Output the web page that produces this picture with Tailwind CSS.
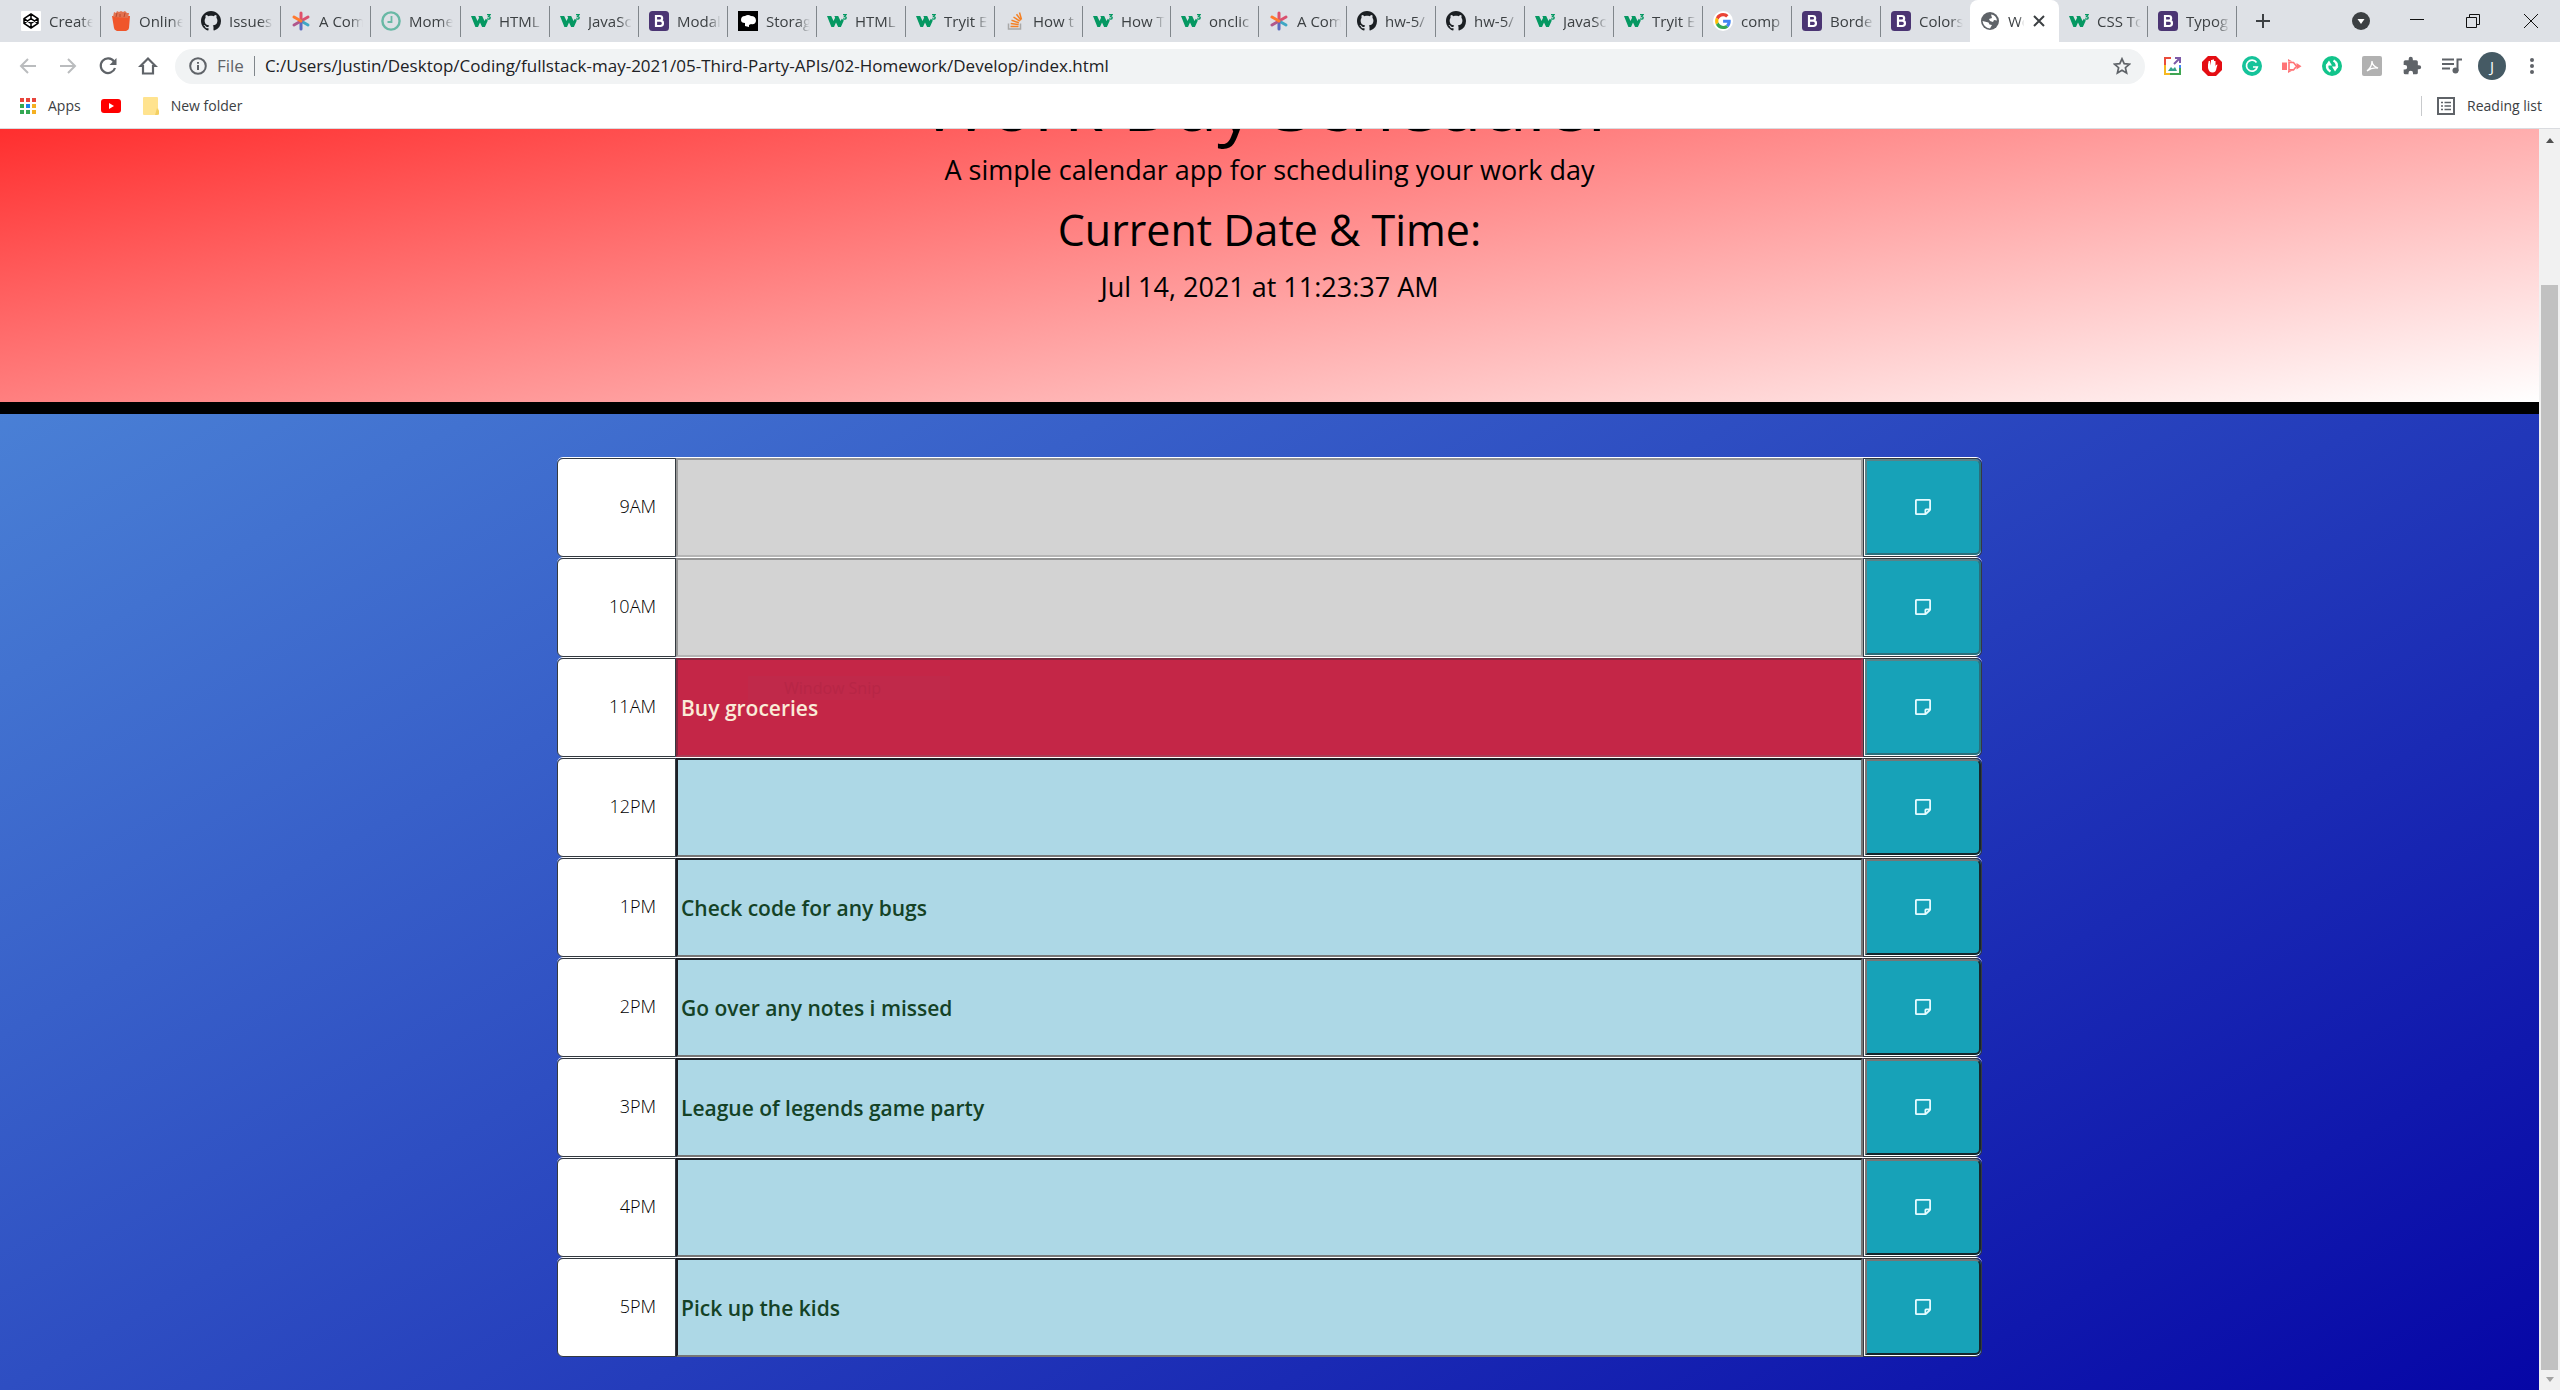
<!DOCTYPE html>
<html lang="en">
<head>
<meta charset="utf-8">
<title>Work Day Scheduler</title>
<script src="https://cdn.jsdelivr.net/npm/@tailwindcss/browser@4"></script>
</head>
<body class="h-screen overflow-hidden flex flex-col bg-white font-['Open_Sans',sans-serif] text-[#212529]">

<svg class="hidden" aria-hidden="true">
  <symbol id="codepen" viewBox="0 0 20 20"><rect width="20" height="20" rx="1" fill="#fff"/><path d="M10 3l7 4.600v4.800L10 17l-7-4.600V7.600zM3 7.600l7 4.800 7-4.800M3 12.400l7-4.800 7 4.800M10 3v4.600M10 12.400V17" fill="none" stroke="#000" stroke-width="1.500" stroke-linejoin="round"/></symbol>
  <symbol id="bin" viewBox="0 0 20 20"><path d="M1 5h18l-1 12q0 2-3 3H6q-3-1-3-3z" fill="#f0562b"/><path d="M2 6l1-5 2 1 1-2 2 1 2-1 2 1 2-1 2 2 2 0-1 5z" fill="#e2724f"/><path d="M5 6l1-4M9 6V3M13 6l1-4" stroke="#b9482c" stroke-width="1"/></symbol>
  <symbol id="github" viewBox="0 0 16 16"><path d="M8 0C3.580 0 0 3.580 0 8c0 3.540 2.290 6.530 5.470 7.590.4.070.55-.17.55-.38 0-.19-.01-.82-.01-1.490-2.010.37-2.530-.49-2.690-.94-.09-.23-.48-.94-.82-1.130-.28-.15-.68-.52-.01-.53.63-.01 1.080.58 1.230.82.72 1.210 1.870.87 2.330.66.07-.52.28-.87.51-1.070-1.780-.2-3.640-.89-3.640-3.950 0-.87.31-1.590.82-2.150-.08-.2-.36-1.020.08-2.120 0 0 .67-.21 2.200.82.64-.18 1.320-.27 2-.27s1.360.09 2 .27c1.530-1.040 2.200-.82 2.200-.82.44 1.100.16 1.920.08 2.120.51.56.82 1.270.82 2.150 0 3.070-1.870 3.750-3.650 3.950.29.25.54.73.54 1.480 0 1.070-.01 1.930-.01 2.200 0 .21.15.46.55.38A8.010 8.010 0 0 0 16 8c0-4.420-3.580-8-8-8z" fill="currentColor"/></symbol>
  <symbol id="star" viewBox="0 0 20 20"><g stroke-width="3" stroke-linecap="round"><path d="M10 10V2" stroke="#e0506a"/><path d="M10 10l7-4" stroke="#d9506e"/><path d="M10 10l7 4" stroke="#3fa7c4"/><path d="M10 10v8" stroke="#5c6bc0"/><path d="M10 10l-7 4" stroke="#b0578c"/><path d="M10 10L3 6" stroke="#ff7a2f"/></g></symbol>
  <symbol id="clock" viewBox="0 0 20 20"><circle cx="10" cy="10" r="8.600" fill="none" stroke="#68b8a5" stroke-width="2.400"/><path d="M10.500 5v6H6.500" fill="none" stroke="#68b8a5" stroke-width="1.800"/></symbol>
  <symbol id="w3" viewBox="0 0 20 20"><path d="M0 5h4.200l2.300 5 1.600-3.300L7.400 5h3.800l2.300 5 1.300-2.200 2 1.800-2.900 6.400h-2.800L9 11.500 7 16H4.400z" fill="#059862"/><path d="M16 3.700h3l-1.500 1.900q1.800 0 1.700 1.300T17.400 8.200l-1.400-.4" fill="none" stroke="#059862" stroke-width="1.300"/></symbol>
  <symbol id="boot" viewBox="0 0 20 20"><rect width="20" height="20" rx="3.500" fill="#4b3573"/><path d="M7 5h3.800a2.300 2.300 0 0 1 0 4.700H7zM7 9.700h4.300a2.600 2.600 0 0 1 0 5.300H7z" fill="none" stroke="#fff" stroke-width="2.200"/></symbol>
  <symbol id="storage" viewBox="0 0 20 20"><rect width="20" height="20" fill="#000"/><path d="M3 9q0-4 4-4 3-2 6 0 5 0 5 5-1 4-5 3l-2 1v2l-4-1v-3q-4 0-4-3z" fill="#fff"/></symbol>
  <symbol id="stack" viewBox="0 0 20 20"><path d="M3.500 12.500V18h12v-5.500" fill="none" stroke="#a8a8a8" stroke-width="1.500"/><path d="M5.500 15.500h8M5.700 12.500l8 1M6.500 9.300l7.400 2.500M8.500 6l6.300 4.200M11.500 3.200l4.500 6M14.500 1.500l2 7" stroke="#f48024" stroke-width="1.500"/></symbol>
  <symbol id="google" viewBox="0 0 48 48"><circle cx="24" cy="24" r="24" fill="#fff"/><g transform="translate(5 5) scale(.8)"><path fill="#EA4335" d="M24 9.500c3.540 0 6.710 1.220 9.210 3.600l6.850-6.850C35.900 2.380 30.470 0 24 0 14.620 0 6.510 5.380 2.560 13.220l7.980 6.190C12.430 13.720 17.740 9.500 24 9.500z"/><path fill="#4285F4" d="M46.980 24.550c0-1.570-.15-3.090-.38-4.550H24v9.020h12.940c-.58 2.960-2.260 5.480-4.780 7.180l7.730 6c4.510-4.180 7.090-10.360 7.090-17.650z"/><path fill="#FBBC05" d="M10.530 28.590c-.48-1.450-.76-2.990-.76-4.590s.27-3.140.76-4.590l-7.980-6.190C.92 16.460 0 20.120 0 24c0 3.880.92 7.540 2.560 10.780l7.970-6.190z"/><path fill="#34A853" d="M24 48c6.480 0 11.930-2.130 15.890-5.810l-7.730-6c-2.150 1.450-4.920 2.300-8.160 2.300-6.260 0-11.570-4.220-13.470-9.910l-7.980 6.190C6.510 42.620 14.620 48 24 48z"/></g></symbol>
  <symbol id="globe" viewBox="0 0 20 20"><circle cx="10" cy="10" r="9" fill="#5f6368"/><path d="M11 3.500q5 .5 6 6l-3-.5-1 2-3-1-1-2 3-1zM2.500 10l6 1.500 1 2 2.500.5-2 3.500Q3.500 16.500 2.500 10z" fill="#fff"/></symbol>
  <symbol id="note" viewBox="0 0 16 16"><path d="M1.500 0A1.500 1.500 0 0 0 0 1.500v13A1.500 1.500 0 0 0 1.500 16h9.090a1.500 1.500 0 0 0 1.060-.44l3.910-3.910a1.500 1.500 0 0 0 .44-1.060V1.500A1.500 1.500 0 0 0 14.500 0zM1.800 1.800h12.400V9.500h-3.200A1.500 1.500 0 0 0 9.500 11v3.200H1.800zM11.200 13.300V11.200h2.100z" fill="#e3fbff" fill-rule="evenodd"/></symbol>
</svg>

<nav id="tabs" class="h-[42px] shrink-0 bg-[#dee1e6] flex items-stretch pl-[11px] text-[15px] text-[#3c4043]" aria-label="Tabs"></nav>

<div class="h-12 shrink-0 flex items-center pl-[18px] pr-[18px]">
  <div class="flex gap-5 w-[157px]">
    <button aria-label="Back" class="size-5"><svg viewBox="0 0 20 20" fill="none" stroke="#babcbe" stroke-width="2"><path d="M18 10H3M10 3l-7 7 7 7"/></svg></button>
    <button aria-label="Forward" class="size-5"><svg viewBox="0 0 20 20" fill="none" stroke="#babcbe" stroke-width="2"><path d="M2 10h15M10 3l7 7-7 7"/></svg></button>
    <button aria-label="Reload" class="size-5"><svg viewBox="0 0 20 20"><path d="M16 5.500A7.300 7.300 0 1 0 17 12" fill="none" stroke="#5f6368" stroke-width="2.200"/><path d="M18.500 2v7h-7z" fill="#5f6368"/></svg></button>
    <button aria-label="Home" class="size-5"><svg viewBox="0 0 20 20" fill="none" stroke="#5f6368" stroke-width="2.200"><path d="M10 2.500L2.500 10H5v7.500h10V10h2.500z"/></svg></button>
  </div>
  <div class="grow h-[35px] rounded-full bg-[#f1f3f4] flex items-center px-3.5">
    <svg class="size-[18px] shrink-0" viewBox="0 0 18 18" fill="none" stroke="#5f6368" stroke-width="2"><circle cx="9" cy="9" r="7.800"/><path d="M9 8v5M9 5v1.800"/></svg>
    <span class="ml-2.5 text-[17px] text-[#5f6368]">File</span>
    <span class="mx-2.5 h-5 w-px bg-[#80868b]"></span>
    <input aria-label="Address" class="grow bg-transparent text-[17px] text-[#202124] outline-none" value="C:/Users/Justin/Desktop/Coding/fullstack-may-2021/05-Third-Party-APIs/02-Homework/Develop/index.html">
    <button aria-label="Bookmark" class="size-[18px]"><svg viewBox="0 0 18 18" fill="none" stroke="#5f6368" stroke-width="1.700"><path d="M9 1.800l2.200 4.900 5.200.5-4 3.500 1.200 5.200L9 13.200l-4.600 2.700 1.200-5.200-4-3.500 5.200-.5z"/></svg></button>
  </div>
  <div class="ml-[17px] flex items-center gap-5">
    <button aria-label="Image capture" class="size-5"><svg viewBox="0 0 20 20" fill="none" stroke-width="2"><path d="M9 2H3v7" stroke="#ea4c3b"/><path d="M3 9v9h5" stroke="#f5b921"/><path d="M8 18h10v-6" stroke="#3fa652"/><path d="M18 12V9" stroke="#4285f4"/><path d="M13 2h5v5M18 2l-6 6" stroke="#7c5aa8"/><path d="M6 15l3-4 2 2 2-2 2 4z" fill="#35a08a"/></svg></button>
    <button aria-label="Ad block" class="size-5"><svg viewBox="0 0 20 20"><path d="M6 0h8l6 6v8l-6 6H6l-6-6V6z" fill="#e40d13"/><path d="M6 8.500V12q1 4.500 4.500 4.500T14.500 12l1-3.500-1.500.5-.5 1.500V5h-1.500v4V3.500h-1.500V9V4H9v5.500L8 5H6.700z" fill="#fff"/></svg></button>
    <button aria-label="Grammar" class="size-5"><svg viewBox="0 0 20 20"><circle cx="10" cy="10" r="10" fill="#15c39a"/><path d="M14.500 6.500A5.500 5.500 0 1 0 15.300 11H11" fill="none" stroke="#fff" stroke-width="1.700"/></svg></button>
    <button aria-label="Screencast" class="size-5"><svg viewBox="0 0 20 20"><path d="M0 6.500h5v7.500H0z" fill="#ff7477"/><path d="M6 3l4.500 2.500H6zM6 17l4.500-2.500H6zM14.500 7l5 3.200-5 3.200z" fill="#ff7477"/><path d="M7 6.500h4.500l3 3.700-3 3.700H7z" fill="none" stroke="#ff7477" stroke-width="1.600"/></svg></button>
    <button aria-label="Sync" class="size-5"><svg viewBox="0 0 20 20"><circle cx="10" cy="10" r="10" fill="#12c48b"/><path d="M8.500 15.500Q4 13 5.500 8.500M11.500 4.500Q16 7 14.500 11.500" fill="none" stroke="#fff" stroke-width="2.400"/><path d="M3.500 9.500L7 4.500l3 5zM16.500 10.500L13 15.500l-3-5z" fill="#fff"/></svg></button>
    <button aria-label="PDF" class="size-5"><svg viewBox="0 0 20 20"><rect width="20" height="20" rx="2" fill="#b1b1b1"/><path d="M5 15q5-4 5-10 0 5 6 7-6-1-11 3z" fill="none" stroke="#fff" stroke-width="1.300"/></svg></button>
    <button aria-label="Extensions" class="size-5"><svg viewBox="0 0 24 24" fill="#5f6368"><path d="M20.500 11H19V7a2 2 0 0 0-2-2h-4V3.500a2.500 2.500 0 0 0-5 0V5H4a2 2 0 0 0-2 2v3.800h1.500a2.700 2.700 0 0 1 0 5.400H2V20a2 2 0 0 0 2 2h3.800v-1.500a2.700 2.700 0 0 1 5.400 0V22H17a2 2 0 0 0 2-2v-4h1.500a2.500 2.500 0 0 0 0-5z"/></svg></button>
    <button aria-label="Media" class="size-5"><svg viewBox="0 0 20 20"><path d="M0 3.500h12M0 8h12M0 12.500h8M15.500 15V3.500H20" fill="none" stroke="#5f6368" stroke-width="2"/><circle cx="13.500" cy="14.500" r="3" fill="#5f6368"/></svg></button>
    <button aria-label="Profile" class="-mx-1 size-7 rounded-full bg-[#455a64] text-[15px] text-white">J</button>
    <button aria-label="Menu" class="size-5"><svg viewBox="0 0 20 20" fill="#5f6368"><circle cx="10" cy="4" r="2"/><circle cx="10" cy="10" r="2"/><circle cx="10" cy="16" r="2"/></svg></button>
  </div>
</div>

<div class="h-[39px] shrink-0 flex items-center pl-5 pr-[18px] pb-1.5 border-b border-[#dadce0] text-sm text-[#3c4043]">
  <a href="#" class="flex items-center gap-3"><svg class="size-4" viewBox="0 0 16 16"><path d="M0 0h4v4H0zM6 0h4v4H6zM12 0h4v4h-4z" fill="#e8453c"/><path d="M0 6h4v4H0zM0 12h4v4H0zM6 12h4v4H6z" fill="#34a853"/><path d="M6 6h4v4H6z" fill="#1a82f0"/><path d="M12 6h4v4h-4zM12 12h4v4h-4z" fill="#f5b021"/></svg>Apps</a>
  <a href="#" aria-label="YouTube" class="ml-5"><svg class="w-5 h-3.5" viewBox="0 0 20 14"><rect width="20" height="14" rx="3" fill="#f00"/><path d="M8 4l5 3-5 3z" fill="#fff"/></svg></a>
  <a href="#" class="ml-[22px] flex items-center gap-3"><svg class="w-4 h-[18px]" viewBox="0 0 16 18"><path d="M1 0h13q1 0 1 1v10l1 3v3q0 1-1 1H1q-1 0-1-1V1q0-1 1-1z" fill="#ffe38f"/><path d="M14 11l2 3v3l-2 1h-2z" fill="#f3cf62"/></svg>New folder</a>
  <span class="ml-auto mr-[15px] h-5 w-px bg-[#c8cacd]"></span>
  <button class="flex items-center gap-3"><svg class="size-[18px]" viewBox="0 0 18 18" fill="none" stroke="#5f6368" stroke-width="2"><rect x="1" y="1" width="16" height="16"/><path d="M4 5.500h2M4 9h2M4 12.500h2M7.500 5.500H14M7.500 9H14M7.500 12.500H14" stroke-width="1.700"/></svg>Reading list</button>
</div>

<div class="grow min-h-0 flex">
  <main class="grow overflow-hidden">
    <div class="-mt-[156px] min-h-[1417px] bg-linear-to-br/srgb from-[#5696de] to-[#0606a6]">
      <header class="h-[441px] border-b-[12px] border-black bg-linear-to-br/srgb from-[#ff0000] to-white pt-[88px] text-center text-black">
        <h1 class="text-[74px] leading-[84px]">Work Day Scheduler</h1>
        <p class="mt-1.5 text-[27px] leading-[38px]">A simple calendar app for scheduling your work day</p>
        <h2 class="mt-[15px] text-[43px] leading-[52px]">Current Date &amp; Time:</h2>
        <p class="mt-3 text-[27px] leading-[38px]">Jul 14, 2021 at 11:23:37 AM</p>
      </header>
      <section id="planner" class="mx-auto mt-[43px] w-[1425px] max-w-full" aria-label="Planner"></section>
    </div>
  </main>
  <div class="w-[21px] shrink-0 bg-[#f1f1f1] flex flex-col items-center justify-between" aria-hidden="true">
    <svg class="size-5" viewBox="0 0 20 20"><path d="M6 14l4-5 4 5z" fill="#505050"/></svg>
    <div class="w-[17px] grow mt-[136px] bg-[#c1c1c1]"></div>
    <svg class="size-5" viewBox="0 0 20 20"><path d="M6 7h8l-4 5z" fill="#a3a3a3"/></svg>
  </div>
</div>

<script>
const tabs = [["codepen","Create"],["bin","Online"],["github","Issues"],["star","A Com"],["clock","Mome"],["w3","HTML"],["w3","JavaSc"],["boot","Modal"],["storage","Storag"],["w3","HTML"],["w3","Tryit E"],["stack","How t"],["w3","How T"],["w3","onclic"],["star","A Com"],["github","hw-5/"],["github","hw-5/"],["w3","JavaSc"],["w3","Tryit E"],["google","comp"],["boot","Borde"],["boot","Colors"],["globe","Wo"],["w3","CSS To"],["boot","Typog"]];
document.getElementById("tabs").innerHTML = tabs.map(([icon, label], i) => {
  const on = icon === "globe";
  const line = on || i === 21 ? "border-transparent" : "border-[#80868b]";
  const width = i < 5 ? "w-[90px]" : i > 10 && i < 15 ? "w-[88px]" : "w-[89px]";
  return `<div class="${width} shrink-0 flex items-center ${on ? "bg-white rounded-t-lg" : ""}">
    <button class="grow h-[31px] flex items-center pl-2.5 border-r ${line}">
      <svg class="size-5 shrink-0 text-[#1b1f23]"><use href="#${icon}"/></svg>
      <span class="ml-2 ${on ? "w-4" : "w-11"} overflow-hidden whitespace-nowrap text-left mask-r-from-70% mask-r-to-100%">${label}</span>
    </button>${on ? `<button aria-label="Close tab" class="size-5 mr-2.5"><svg viewBox="0 0 20 20" stroke="#3c4043" stroke-width="2"><path d="M5 5l10 10M15 5L5 15"/></svg></button>` : ""}
  </div>`;
}).join("") + `
  <button aria-label="New tab" class="self-center ml-[18px]"><svg class="size-4" viewBox="0 0 16 16" stroke="#3c4043" stroke-width="2"><path d="M8 1v14M1 8h14"/></svg></button>
  <div class="ml-auto flex items-center pr-[22px]">
    <button aria-label="Tab search" class="mr-10"><svg class="size-[18px]" viewBox="0 0 18 18"><circle cx="9" cy="9" r="9" fill="#3c4043"/><path d="M5.500 7h7L9 12z" fill="#fff"/></svg></button>
    <button aria-label="Minimise" class="mr-[42px]"><svg class="size-3.5" viewBox="0 0 14 14" stroke="#111"><path d="M0 5.500h14"/></svg></button>
    <button aria-label="Restore" class="mr-11"><svg class="size-3.5" viewBox="0 0 14 14" fill="none" stroke="#111"><path d="M.5 3.500h10v10H.5zM3.500 3.500v-3h10v10h-3"/></svg></button>
    <button aria-label="Close"><svg class="size-3.5" viewBox="0 0 14 14" stroke="#111"><path d="M0 0l14 14M14 0L0 14"/></svg></button>
  </div>`;

const slots = [["9AM","","past"],["10AM","","past"],["11AM","Buy groceries","now"],["12PM","","next"],["1PM","Check code for any bugs","next"],["2PM","Go over any notes i missed","next"],["3PM","League of legends game party","next"],["4PM","","next"],["5PM","Pick up the kids","next"]];
const field = {
  past: "bg-[#d3d3d3] border-t-[#969696] border-l-[#969696] border-r-[#a0a0a0] border-b-[#b5b5b5]",
  now: "bg-[#c42647] text-[#faebd7] border-t-[#86283f] border-l-[#86283f] border-r-[#a83c54] border-b-[#a83c54]",
  next: "bg-[#add8e6] text-[#144226] border-t-[#1c1f26] border-l-[#1c1f26] border-r-[#767676] border-b-[#767676]"
};
const save = {
  past: "border-t-[#5a8288] border-l-[#5a8288] border-r-[#2b6f7b] border-b-[#2b6f7b]",
  next: "border-t-[#767676] border-l-[#767676] border-r-[#16262c] border-b-[#16262c]"
};
document.getElementById("planner").innerHTML = slots.map(([hour, text, state]) => `
  <div class="h-[100px] flex border-t border-white rounded-t-md">
    <label for="t${hour}" class="w-[119px] shrink-0 flex items-center justify-end pr-[19px] pb-1 bg-white border border-[#343a40] rounded-l-md text-lg font-light text-black">${hour}</label>
    <div class="grow relative flex">
      <textarea id="t${hour}" class="grow resize-none overflow-hidden border-2 pl-[3px] pt-[33px] text-[21px] leading-[30px] font-semibold outline-none ${field[state]}">${text}</textarea>
      ${state === "now" ? `<div aria-hidden="true" class="absolute left-[72px] top-[18px] w-[202px] h-[24px] bg-[#c0294a] pl-9 text-base leading-6 text-[#b72646]">Window Snip</div>` : ""}
    </div>
    <div class="w-[119px] shrink-0 flex border-y border-x border-[#343a40] rounded-r-md">
      <button aria-label="Save ${hour}" class="grow flex items-center justify-center bg-[#17a2b8] border-l border-b border-white rounded-r-md">
        <span class="self-stretch grow flex items-center justify-center border-2 rounded-r-md ${save[state] || save.past}"><svg class="size-4"><use href="#note"/></svg></span>
      </button>
    </div>
  </div>`).join("");
</script>
</body>
</html>
